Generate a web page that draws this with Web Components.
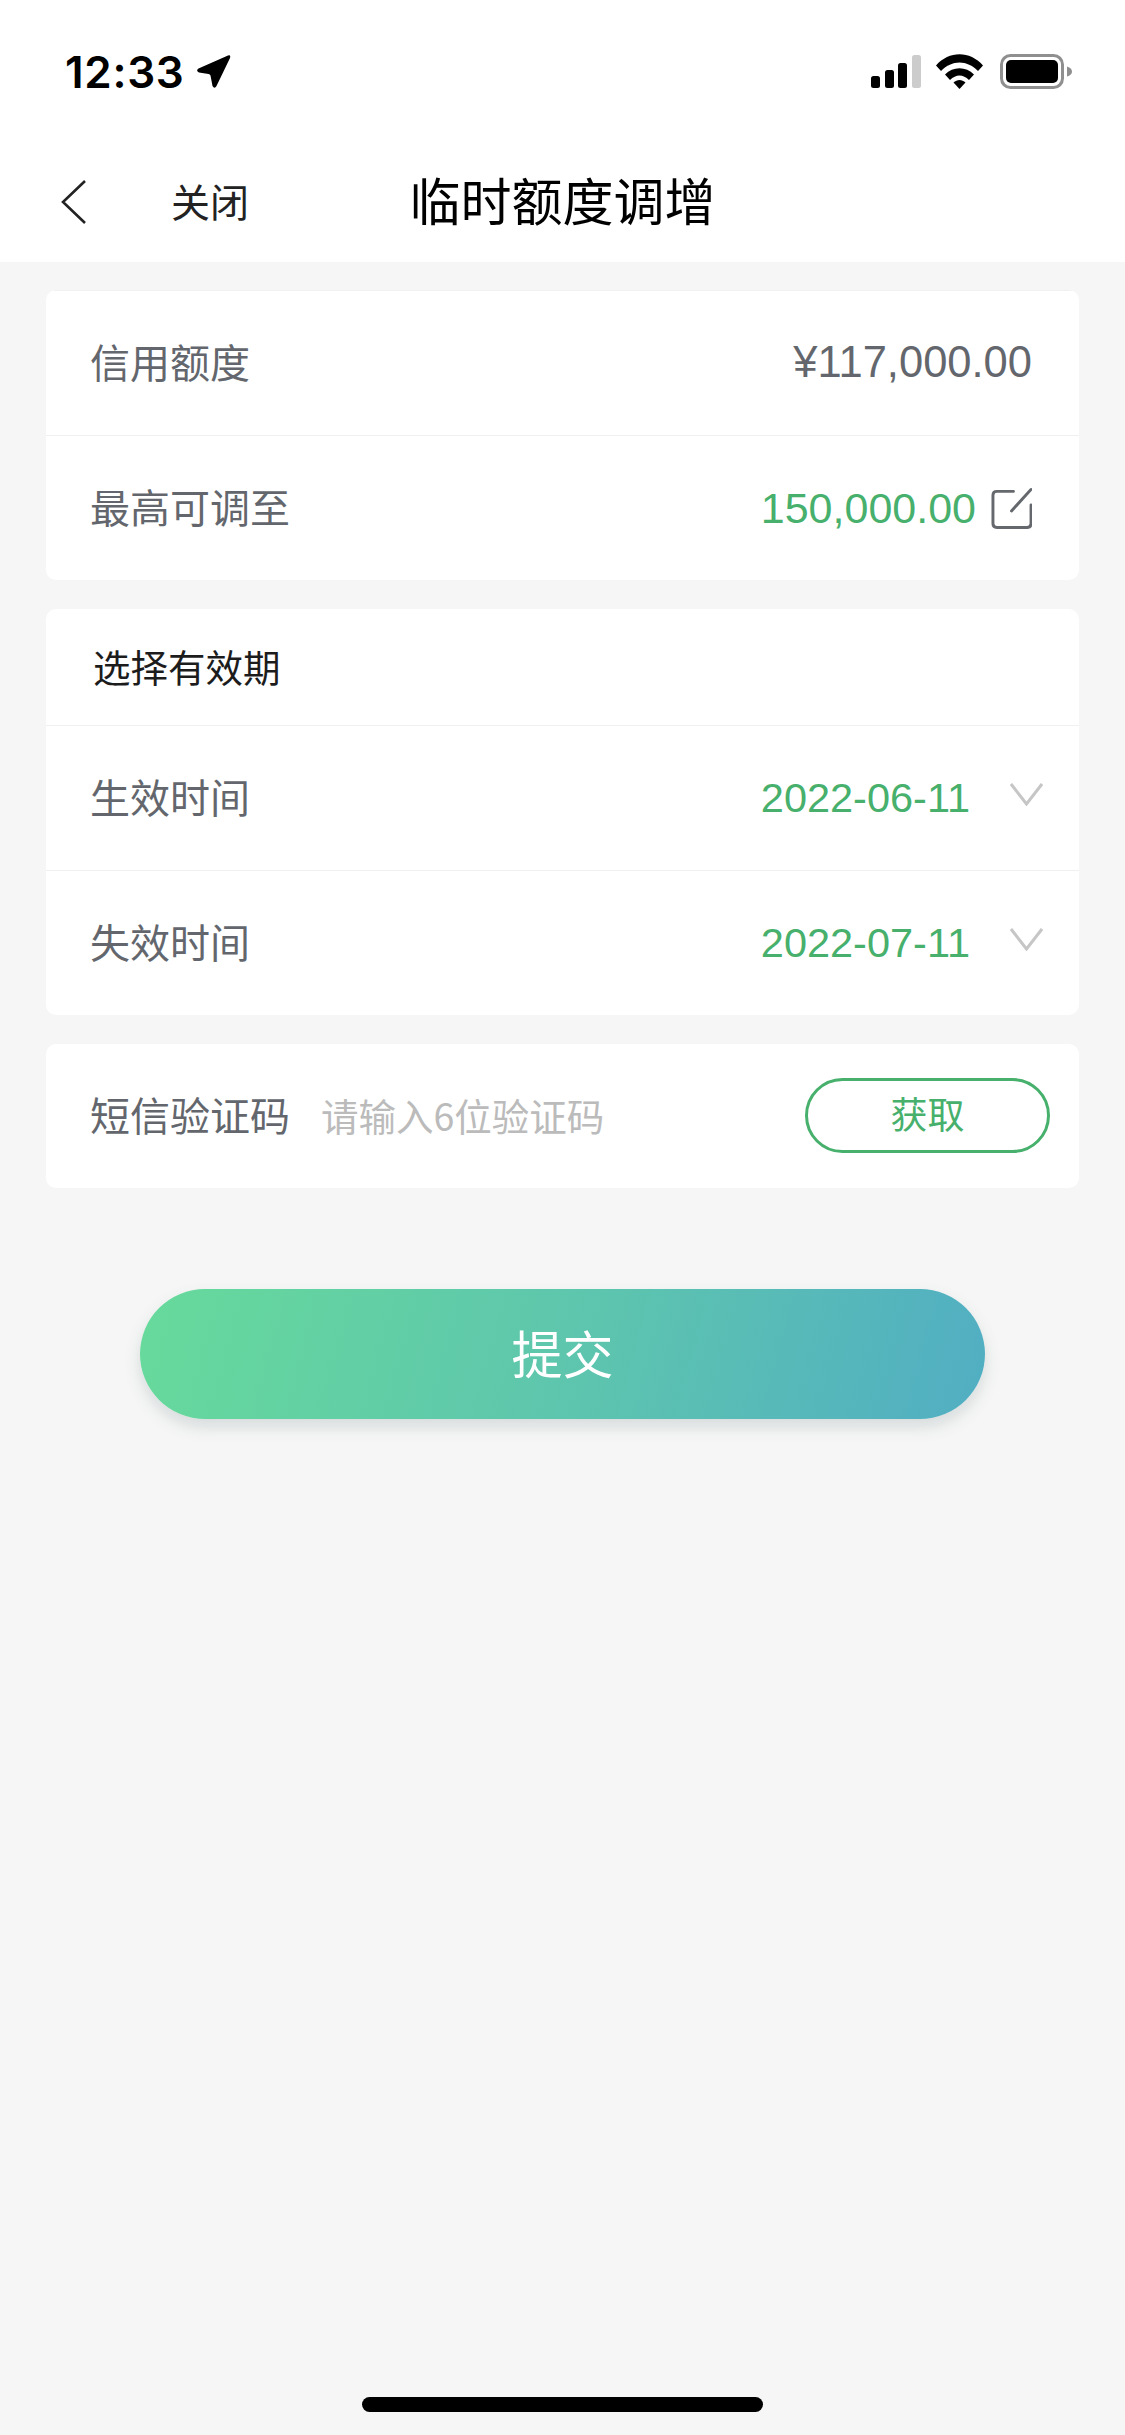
<!DOCTYPE html>
<html lang="zh">
<head>
<meta charset="utf-8">
<title>临时额度调增</title>
<style>
  html, body { margin: 0; padding: 0; background: #f6f6f6; }
  body { font-family: "Liberation Sans", "Noto Sans CJK SC", sans-serif; }
  .amount { font-size: 43.5px; }
</style>
</head>
<body>
<limit-page>
  <status-bar slot="top" time="12:33"></status-bar>
  <nav-bar slot="top" title="临时额度调增" close="关闭"></nav-bar>

  <info-card>
    <info-row label="信用额度" pad="47"><span class="amount">¥117,000.00</span></info-row>
    <info-row label="最高可调至" tone="green" gap="15" pad="47">
      150,000.00
      <svg slot="icon" width="41" height="42" viewBox="0 0 42 42" fill="none" stroke="#65686d" stroke-width="3" stroke-linecap="round" stroke-linejoin="round">
        <path d="M23 4H6Q2 4 2 8V37Q2 41 6 41H37Q41 41 41 37V18"/>
        <path d="M21 24L41 2"/>
      </svg>
    </info-row>
  </info-card>

  <info-card>
    <card-heading>选择有效期</card-heading>
    <info-row label="生效时间" tone="green" small gap="40" pad="36">
      2022-06-11
      <chevron-down slot="icon"></chevron-down>
    </info-row>
    <info-row label="失效时间" tone="green" small gap="40" pad="36">
      2022-07-11
      <chevron-down slot="icon"></chevron-down>
    </info-row>
  </info-card>

  <info-card>
    <sms-row label="短信验证码" placeholder="请输入6位验证码" action="获取"></sms-row>
  </info-card>

  <submit-button>提交</submit-button>
  <home-indicator slot="bottom"></home-indicator>
</limit-page>

<script>
const CJK = '"Noto Sans CJK SC", sans-serif';

class LimitPage extends HTMLElement {
  constructor() {
    super();
    this.attachShadow({ mode: 'open' });
    this.shadowRoot.innerHTML = `
      <style>
        :host {
          display: flex;
          flex-direction: column;
          height: 2435px;
          overflow: hidden;
          background: #f6f6f6;
        }
        .content {
          flex: 1;
          display: flex;
          flex-direction: column;
          gap: 29px;
          padding: 28px 46px 0;
        }
      </style>
      <slot name="top"></slot>
      <div class="content"><slot></slot></div>
      <slot name="bottom"></slot>
    `;
  }
}
customElements.define('limit-page', LimitPage);

class StatusBar extends HTMLElement {
  constructor() {
    super();
    this.attachShadow({ mode: 'open' });
    this.shadowRoot.innerHTML = `
      <style>
        :host {
          display: flex;
          align-items: center;
          height: 142px;
          box-sizing: border-box;
          padding: 0 53px 0 65px;
          background: #fff;
          color: #000;
        }
        .time {
          font: 600 44px/1 Inter, sans-serif;
          letter-spacing: 0.7px;
          margin-right: 11px;
          padding-top: 2px;
        }
        .icons { display: flex; align-items: center; margin-left: auto; }
        svg { display: block; }
      </style>
      <span class="time"></span>
      <svg width="35" height="35" viewBox="0 0 35 35">
        <path d="M32 1.5Q35 0.5 34 4L20.5 32Q18.5 35.5 16.5 32L14.5 21.5Q14 20 12.5 20L3 18.5Q-0.5 17 2.5 14.5Z" fill="#000"/>
      </svg>
      <div class="icons">
        <svg width="50" height="33" viewBox="0 0 50 33" style="margin-right:15px">
          <rect x="0" y="21" width="9" height="12" rx="2.5" fill="#000"/>
          <rect x="14" y="15" width="9" height="18" rx="2.5" fill="#000"/>
          <rect x="27" y="8" width="9" height="25" rx="2.5" fill="#000"/>
          <rect x="41" y="0" width="9" height="33" rx="2.5" fill="#ccc"/>
        </svg>
        <svg width="47" height="36" viewBox="0 0 47 36" style="margin-right:17px">
          <path d="M0 12.5C13 -2.5 34 -2.5 47 12.5L42 18C31 6.5 16 6.5 5 18Z" fill="#000"/>
          <path d="M9 21.5C17 13 30 13 38 21.5L33 27C27 21 20 21 14 27Z" fill="#000"/>
          <path d="M17.5 29.5C21 26 26 26 29.5 29.5L23.5 36Z" fill="#000"/>
        </svg>
        <svg width="72" height="35" viewBox="0 0 72 35">
          <rect x="1.5" y="1.5" width="61" height="32" rx="9" fill="none" stroke="#8f8f8f" stroke-width="3"/>
          <rect x="6" y="6" width="52" height="23" rx="5" fill="#000"/>
          <path d="M67 12.5Q72 14 72 17.5Q72 21 67 22.5Z" fill="#8f8f8f"/>
        </svg>
      </div>
    `;
  }
  connectedCallback() {
    this.shadowRoot.querySelector('.time').textContent = this.getAttribute('time');
  }
}
customElements.define('status-bar', StatusBar);

class NavBar extends HTMLElement {
  constructor() {
    super();
    this.attachShadow({ mode: 'open' });
    this.shadowRoot.innerHTML = `
      <style>
        :host {
          display: grid;
          grid-template-columns: 1fr auto 1fr;
          align-items: center;
          height: 120px;
          box-sizing: border-box;
          padding: 0 61px 6px;
          background: #fff;
          color: #000;
        }
        .left { display: flex; align-items: center; gap: 85px; }
        svg { display: block; margin-top: 5px; }
        .close { font: 400 39px/1 ${CJK}; color: #222; padding-top: 2px; }
        h1 { margin: 0; font: 400 51px/1 ${CJK}; }
      </style>
      <div class="left">
        <svg width="25" height="44" viewBox="0 0 25 44" fill="none" stroke="#222" stroke-width="2.6">
          <path d="M24 1L2 22L24 43"/>
        </svg>
        <span class="close"></span>
      </div>
      <h1></h1>
      <span></span>
    `;
  }
  connectedCallback() {
    this.shadowRoot.querySelector('.close').textContent = this.getAttribute('close');
    this.shadowRoot.querySelector('h1').textContent = this.getAttribute('title');
  }
}
customElements.define('nav-bar', NavBar);

class InfoCard extends HTMLElement {
  constructor() {
    super();
    this.attachShadow({ mode: 'open' });
    this.shadowRoot.innerHTML = `
      <style>
        :host {
          display: flex;
          flex-direction: column;
          background: #fff;
          border-radius: 10px;
          overflow: hidden;
        }
      </style>
      <slot></slot>
    `;
  }
}
customElements.define('info-card', InfoCard);

class CardHeading extends HTMLElement {
  constructor() {
    super();
    this.attachShadow({ mode: 'open' });
    this.shadowRoot.innerHTML = `
      <style>
        :host {
          display: flex;
          align-items: center;
          height: 116px;
          box-sizing: border-box;
          padding: 0 0 2px 47px;
          color: #1c1c1c;
          font: 400 37.5px/1 ${CJK};
        }
      </style>
      <slot></slot>
    `;
  }
}
customElements.define('card-heading', CardHeading);

class InfoRow extends HTMLElement {
  constructor() {
    super();
    this.attachShadow({ mode: 'open' });
    this.shadowRoot.innerHTML = `
      <style>
        :host {
          display: flex;
          align-items: center;
          justify-content: space-between;
          height: 145px;
          box-sizing: border-box;
          border-top: 1px solid #f0f0f0;
          padding-left: 44px;
          color: #63676d;
        }
        .label { font: 400 40px/1 ${CJK}; padding-bottom: 5px; }
        .value {
          display: flex;
          align-items: center;
          font: 400 43px/1 "Liberation Sans", sans-serif;
        }
        :host([tone="green"]) .value { color: #47b06c; }
        :host([small]) .value { font-size: 41.5px; }
        ::slotted(svg) { display: block; }
      </style>
      <span class="label"></span>
      <span class="value"><slot></slot><slot name="icon"></slot></span>
    `;
  }
  connectedCallback() {
    const gap = this.getAttribute('gap');
    const value = this.shadowRoot.querySelector('.value');
    this.shadowRoot.querySelector('.label').textContent = this.getAttribute('label');
    if (gap) value.style.gap = gap + 'px';
    value.style.paddingRight = (this.getAttribute('pad') || 49) + 'px';
  }
}
customElements.define('info-row', InfoRow);

class ChevronDown extends HTMLElement {
  constructor() {
    super();
    this.attachShadow({ mode: 'open' });
    this.shadowRoot.innerHTML = `
      <style>
        :host { display: block; margin-top: -8px; }
        svg { display: block; }
      </style>
      <svg width="33" height="23" viewBox="0 0 33 23" fill="none" stroke="#c6c6c6" stroke-width="3">
        <path d="M1 1L16.5 21L32 1"/>
      </svg>
    `;
  }
}
customElements.define('chevron-down', ChevronDown);

class SmsRow extends HTMLElement {
  constructor() {
    super();
    this.attachShadow({ mode: 'open' });
    this.shadowRoot.innerHTML = `
      <style>
        :host {
          display: flex;
          align-items: center;
          height: 144px;
          box-sizing: border-box;
          padding: 0 29px 1px 44px;
        }
        .label { font: 400 40px/1 ${CJK}; color: #63676d; margin-right: 31px; padding-bottom: 4px; }
        .ph { flex: 1; font: 400 37.5px/1 ${CJK}; color: #bbb; padding-bottom: 1px; }
        button {
          width: 245px;
          height: 75px;
          box-sizing: border-box;
          border: 3px solid #47b06c;
          border-radius: 38px;
          background: #fff;
          color: #47b06c;
          font: 400 37px/1 ${CJK};
          padding: 0 0 5px;
        }
      </style>
      <span class="label"></span>
      <span class="ph"></span>
      <button type="button"></button>
    `;
  }
  connectedCallback() {
    this.shadowRoot.querySelector('.label').textContent = this.getAttribute('label');
    this.shadowRoot.querySelector('.ph').textContent = this.getAttribute('placeholder');
    this.shadowRoot.querySelector('button').textContent = this.getAttribute('action');
  }
}
customElements.define('sms-row', SmsRow);

class SubmitButton extends HTMLElement {
  constructor() {
    super();
    this.attachShadow({ mode: 'open' });
    this.shadowRoot.innerHTML = `
      <style>
        :host { display: block; padding: 72px 94px 0; }
        button {
          display: block;
          width: 100%;
          height: 130px;
          border: 0;
          border-radius: 65px;
          background: linear-gradient(105deg, #67da9b 0%, #5ec6ad 50%, #51aec3 100%);
          box-shadow: 0 8px 16px rgba(60, 90, 90, 0.17);
          color: #fff;
          font: 400 51px/1 ${CJK};
          padding: 0 0 4px;
        }
      </style>
      <button type="button"><slot></slot></button>
    `;
  }
}
customElements.define('submit-button', SubmitButton);

class HomeIndicator extends HTMLElement {
  constructor() {
    super();
    this.attachShadow({ mode: 'open' });
    this.shadowRoot.innerHTML = `
      <style>
        :host {
          display: flex;
          justify-content: center;
          padding-bottom: 23px;
        }
        div { width: 401px; height: 15px; border-radius: 8px; background: #000; }
      </style>
      <div></div>
    `;
  }
}
customElements.define('home-indicator', HomeIndicator);
</script>
</body>
</html>
